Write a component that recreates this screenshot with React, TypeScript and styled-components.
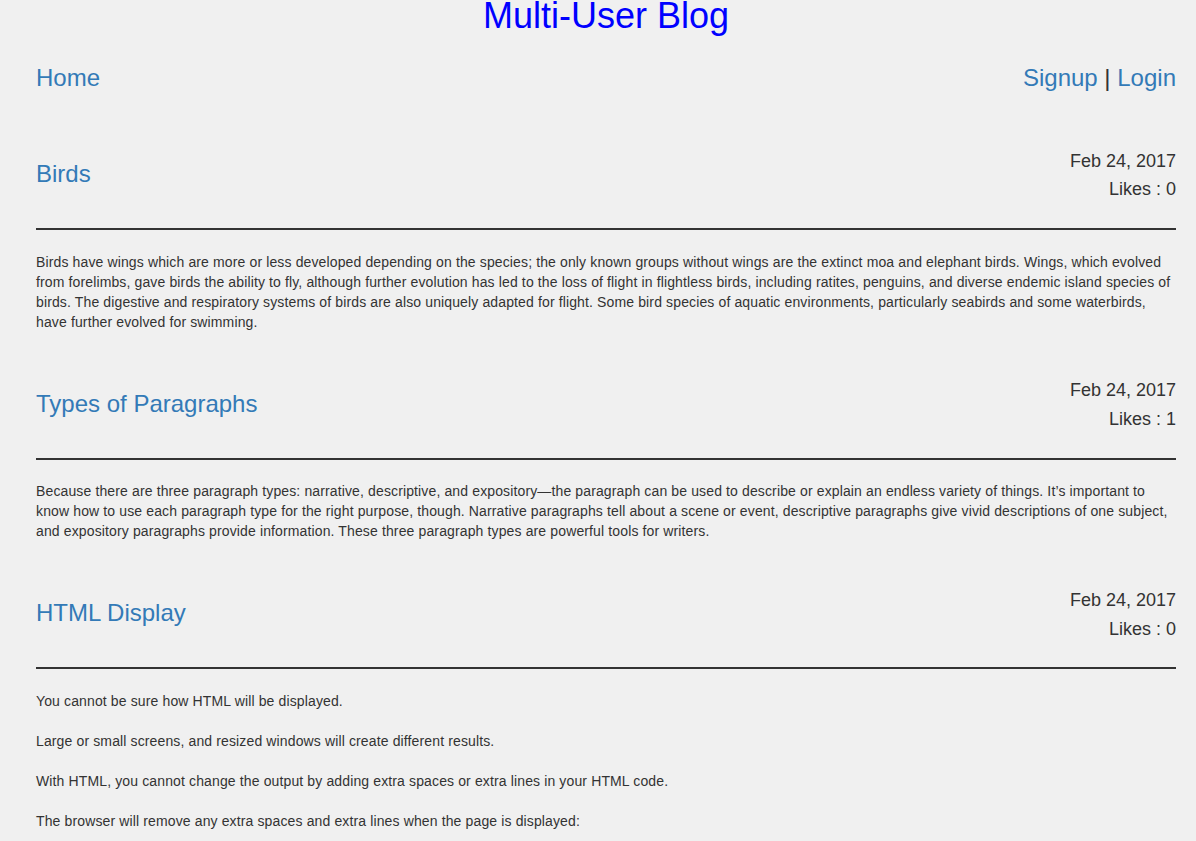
import styled, { createGlobalStyle } from "styled-components"

type Post = {
  title: string
  date: string
  likes: number
  body: string[]
}

const posts: Post[] = [
  {
    title: "Birds",
    date: "Feb 24, 2017",
    likes: 0,
    body: [
      "Birds have wings which are more or less developed depending on the species; the only known groups without wings are the extinct moa and elephant birds. Wings, which evolved from forelimbs, gave birds the ability to fly, although further evolution has led to the loss of flight in flightless birds, including ratites, penguins, and diverse endemic island species of birds. The digestive and respiratory systems of birds are also uniquely adapted for flight. Some bird species of aquatic environments, particularly seabirds and some waterbirds, have further evolved for swimming.",
    ],
  },
  {
    title: "Types of Paragraphs",
    date: "Feb 24, 2017",
    likes: 1,
    body: [
      "Because there are three paragraph types: narrative, descriptive, and expository\u2014the paragraph can be used to describe or explain an endless variety of things. It\u2019s important to know how to use each paragraph type for the right purpose, though. Narrative paragraphs tell about a scene or event, descriptive paragraphs give vivid descriptions of one subject, and expository paragraphs provide information. These three paragraph types are powerful tools for writers.",
    ],
  },
  {
    title: "HTML Display",
    date: "Feb 24, 2017",
    likes: 0,
    body: [
      "You cannot be sure how HTML will be displayed.",
      "Large or small screens, and resized windows will create different results.",
      "With HTML, you cannot change the output by adding extra spaces or extra lines in your HTML code.",
      "The browser will remove any extra spaces and extra lines when the page is displayed:",
    ],
  },
]

export default function App() {
  return (
    <>
      <GlobalStyle />
      <Page>
        <SiteTitle>Multi-User Blog</SiteTitle>
        <Nav>
          <NavLink href="#">Home</NavLink>
          <span>
            <NavLink href="#">Signup</NavLink> | <NavLink href="#">Login</NavLink>
          </span>
        </Nav>
        <Feed>
          {posts.map((p) => (
            <article key={p.title}>
              <PostHeader>
                <PostTitle href="#">{p.title}</PostTitle>
                <Meta>
                  <MetaLine>{p.date}</MetaLine>
                  <MetaLine>Likes : {p.likes}</MetaLine>
                </Meta>
              </PostHeader>
              <Divider />
              <PostBody>
                {p.body.map((t, i) => (
                  <p key={i}>{t}</p>
                ))}
              </PostBody>
            </article>
          ))}
        </Feed>
      </Page>
    </>
  )
}

const GlobalStyle = createGlobalStyle`
  body {
    margin: 0;
    background: #f0f0f0;
    color: #333;
    font-family: "Liberation Sans", Arial, Helvetica, sans-serif;
    font-size: 14px;
    line-height: 1.42857;
  }
`

const Page = styled.div`
  padding: 0 20px 40px 36px;
`

const SiteTitle = styled.h1`
  margin: 0;
  text-align: center;
  font-size: 36px;
  font-weight: normal;
  line-height: 31px;
  color: #0000ff;
`

const Nav = styled.nav`
  display: flex;
  justify-content: space-between;
  margin-top: 34px;
  font-size: 24px;
  line-height: 26.4px;
  color: #333;
`

const NavLink = styled.a`
  color: #337ab7;
  text-decoration: none;
`

const Feed = styled.main`
  display: flex;
  flex-direction: column;
  gap: 37px;
  margin-top: 48.6px;
`

const PostHeader = styled.header`
  display: flex;
  justify-content: space-between;
  align-items: center;
`

const PostTitle = styled.a`
  font-size: 24px;
  line-height: 26.4px;
  color: #337ab7;
  text-decoration: none;
`

const Meta = styled.div`
  display: flex;
  flex-direction: column;
  align-items: flex-end;
  gap: 9.2px;
  padding: 11.5px 0 8.5px;
`

const MetaLine = styled.h4`
  margin: 0;
  font-size: 18px;
  font-weight: normal;
  line-height: 19.8px;
`

const Divider = styled.hr`
  margin: 19.3px 0 22.5px;
  border: 0;
  border-top: 2px solid #333;
`

const PostBody = styled.div`
  display: flex;
  flex-direction: column;
  gap: 20px;
  letter-spacing: 0.13px;

  p {
    margin: 0;
  }
`
